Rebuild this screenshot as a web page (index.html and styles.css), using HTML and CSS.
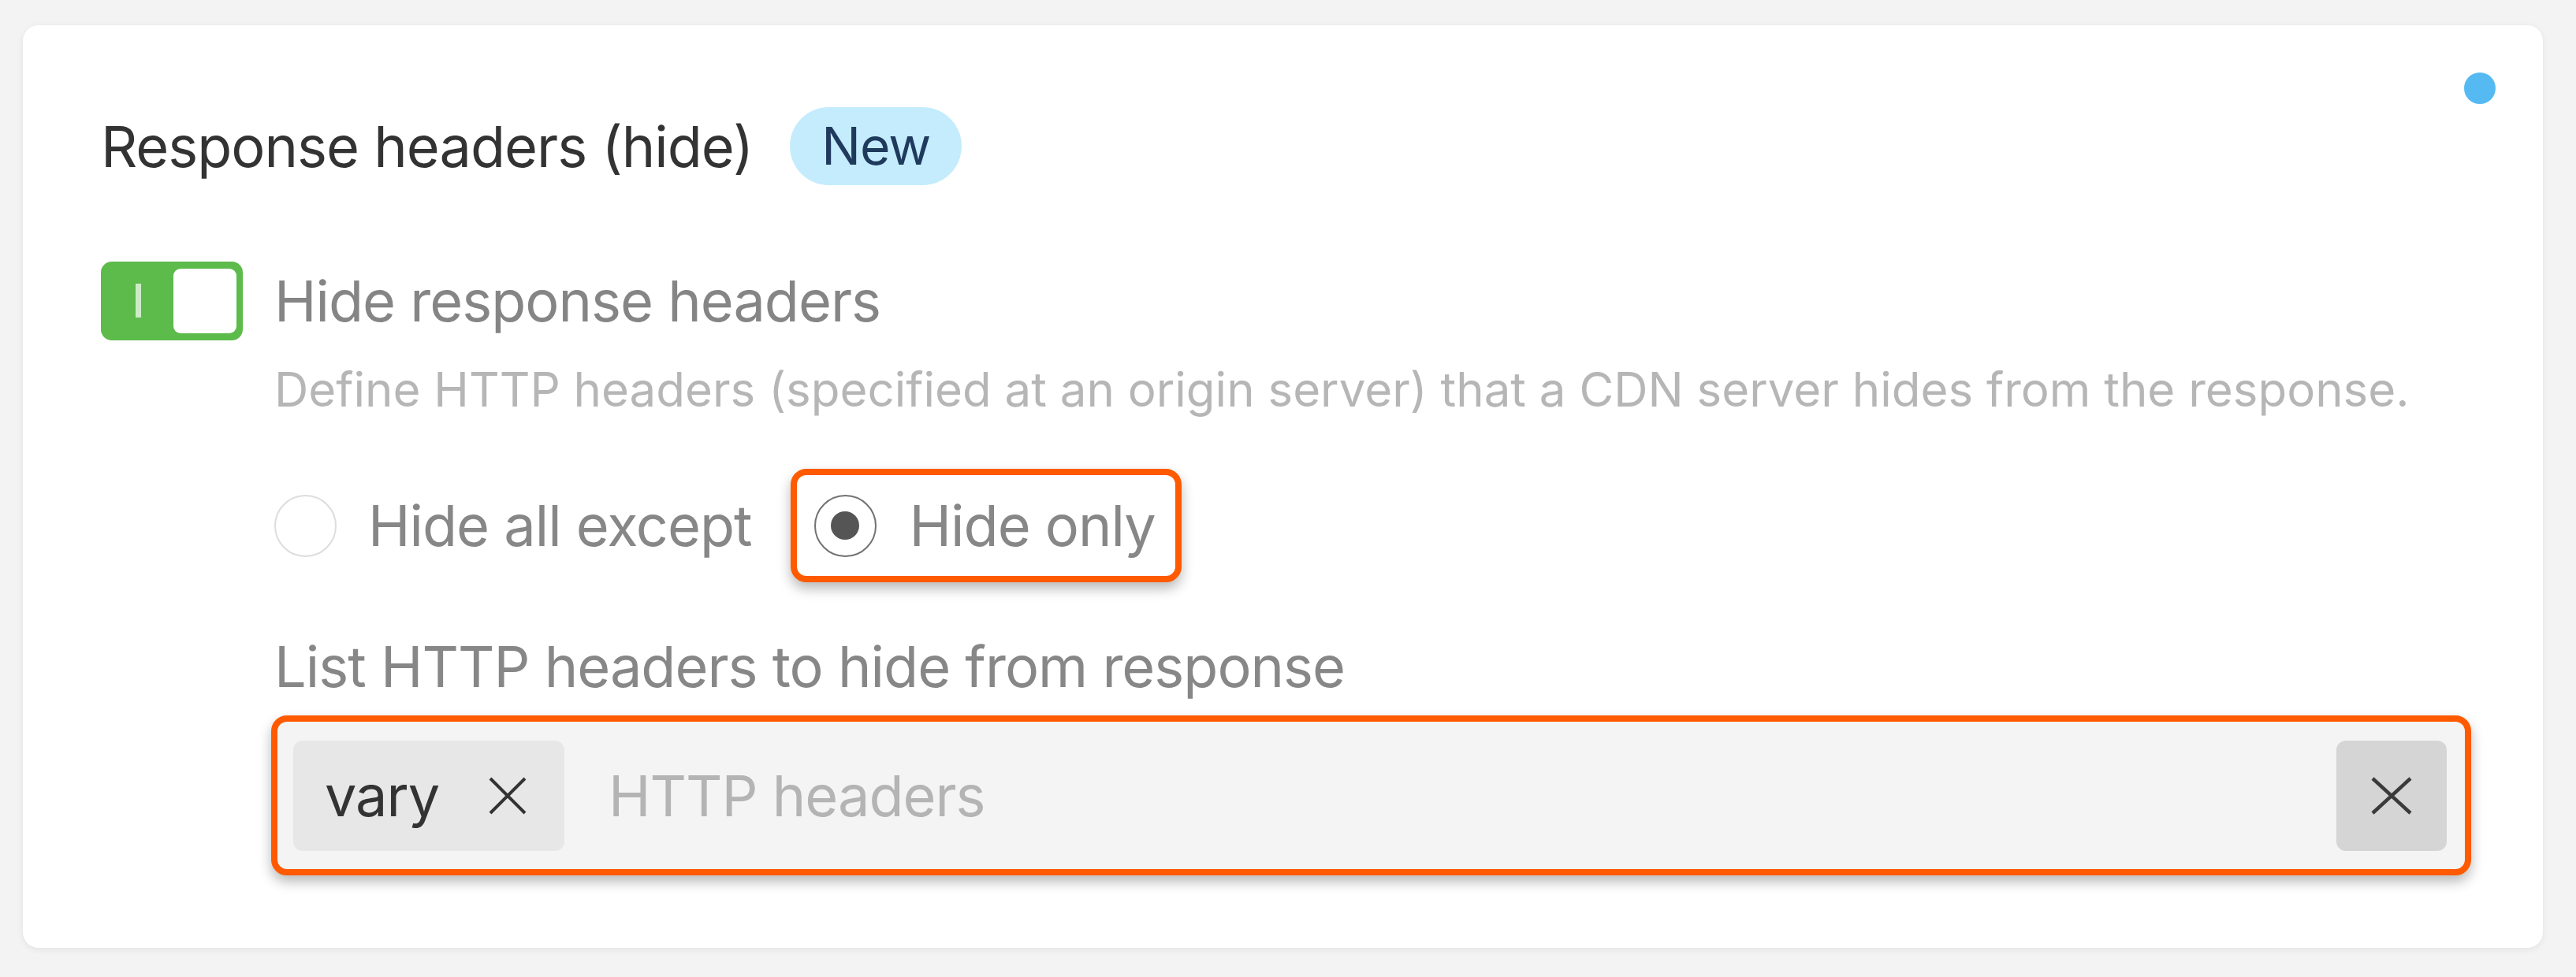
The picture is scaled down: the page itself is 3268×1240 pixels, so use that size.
FILE: index.html
```html
<!DOCTYPE html>
<html lang="en">
<head>
<meta charset="utf-8">
<title>Response headers (hide)</title>
<link rel="stylesheet" href="styles.css">
</head>
<body>
<div class="card">
  <span class="dot"></span>
  <div class="title-row">
    <h2 class="title">Response headers (hide)</h2>
    <span class="badge">New</span>
  </div>
  <div class="toggle-row">
    <div class="toggle"><span class="toggle-bar"></span><span class="toggle-knob"></span></div>
    <span class="toggle-label">Hide response headers</span>
  </div>
  <div class="indent">
    <p class="desc">Define HTTP headers (specified at an origin server) that a CDN server hides from the response.</p>
    <div class="radio-row">
      <label class="radio-option">
        <span class="radio"></span>
        <span class="radio-label">Hide all except</span>
      </label>
      <label class="radio-option highlight">
        <span class="radio checked"><span class="radio-dot"></span></span>
        <span class="radio-label">Hide only</span>
      </label>
    </div>
    <div class="list-label">List HTTP headers to hide from response</div>
    <div class="input">
      <span class="tag">
        <span class="tag-text">vary</span>
        <svg class="x-icon" viewBox="0 0 48 48" width="48" height="48"><path d="M2 2L46 46M46 2L2 46" stroke="#333" stroke-width="4" fill="none"/></svg>
      </span>
      <span class="placeholder">HTTP headers</span>
      <span class="clear-btn">
        <svg class="x-icon" viewBox="0 0 52 48" width="52" height="48"><path d="M2 2L50 46M50 2L2 46" stroke="#3a3a3a" stroke-width="4.5" fill="none"/></svg>
      </span>
    </div>
  </div>
</div>
</body>
</html>
```
FILE: styles.css
```css
html, body {
  margin: 0;
  padding: 0;
}
body {
  background: #f3f3f3;
  width: 3268px;
  height: 1240px;
  overflow: hidden;
  font-family: "Inter", "Noto Sans", sans-serif;
  padding-top: 32px;
  box-sizing: border-box;
}
.card {
  position: relative;
  margin-left: 29px;
  width: 3197px;
  box-sizing: border-box;
  background: #ffffff;
  border-radius: 20px;
  box-shadow: 0 2px 8px rgba(0, 0, 0, 0.07);
  padding: 104px 91px 92px 99px;
}
.dot {
  position: absolute;
  top: 60px;
  right: 60px;
  width: 40px;
  height: 40px;
  border-radius: 50%;
  background: #56baf2;
}
.title-row {
  display: flex;
  align-items: center;
  gap: 47px;
  height: 99px;
}
.title {
  margin: 0;
  font-size: 72px;
  font-weight: 400;
  line-height: 100px;
  letter-spacing: -1px;
  color: #333333;
}
.badge {
  display: inline-flex;
  align-items: center;
  height: 99px;
  padding: 0 40px;
  border-radius: 50px;
  background: #c4ecfd;
  color: #1f3a5c;
  font-size: 66px;
  letter-spacing: -1px;
  line-height: 99px;
}
.toggle-row {
  display: flex;
  align-items: center;
  gap: 40px;
  margin-top: 97px;
  height: 100px;
}
.toggle {
  position: relative;
  width: 180px;
  height: 100px;
  border-radius: 14px;
  background: #5cbb4a;
  display: flex;
  align-items: center;
  justify-content: flex-end;
  padding: 8px;
  box-sizing: border-box;
}
.toggle-bar {
  position: absolute;
  left: 44px;
  top: 28px;
  width: 7px;
  height: 43px;
  background: rgba(255, 255, 255, 0.7);
}
.toggle-knob {
  width: 80px;
  height: 82px;
  border-radius: 9px;
  background: #ffffff;
}
.toggle-label {
  font-size: 72px;
  line-height: 100px;
  letter-spacing: -1px;
  color: #858585;
}
.indent {
  padding-left: 220px;
}
.desc {
  margin: 22px 0 0 0;
  font-size: 60px;
  line-height: 80px;
  color: #b6b6b6;
  white-space: nowrap;
}
.radio-row {
  display: flex;
  align-items: center;
  gap: 49px;
  margin-top: 61px;
  height: 144px;
}
.radio-option {
  display: flex;
  align-items: center;
  gap: 40px;
}
.radio {
  width: 79px;
  height: 79px;
  box-sizing: border-box;
  border-radius: 50%;
  border: 2.5px solid #dddddd;
  background: #fff;
  display: flex;
  align-items: center;
  justify-content: center;
}
.radio.checked {
  border-color: #727272;
}
.radio-dot {
  width: 36px;
  height: 36px;
  border-radius: 50%;
  background: #555555;
}
.radio-label {
  font-size: 72px;
  line-height: 100px;
  letter-spacing: -1px;
  color: #878787;
}
.highlight {
  border: 8px solid #ff5a00;
  border-radius: 20px;
  padding: 24px 25px 24px 22px;
  gap: 42px;
  box-shadow: 0 8px 16px rgba(0, 0, 0, 0.28);
  background: #fff;
  height: 144px;
  box-sizing: border-box;
}
.list-label {
  margin-top: 57px;
  font-size: 72px;
  line-height: 100px;
  letter-spacing: -1px;
  color: #878787;
}
.input {
  margin-top: 12px;
  margin-left: -4px;
  height: 203px;
  box-sizing: border-box;
  border: 8px solid #ff5a00;
  border-radius: 20px;
  background: #f4f4f4;
  box-shadow: 0 8px 16px rgba(0, 0, 0, 0.28);
  display: flex;
  align-items: center;
  padding: 0 23px 0 20px;
}
.tag {
  display: flex;
  align-items: center;
  height: 140px;
  width: 344px;
  box-sizing: border-box;
  padding: 0 48px 0 40px;
  justify-content: space-between;
  border-radius: 12px;
  background: #e7e7e7;
}
.tag-text {
  font-size: 72px;
  line-height: 100px;
  letter-spacing: -1px;
  color: #333333;
}
.x-icon {
  display: block;
}
.placeholder {
  flex: 1;
  margin-left: 56px;
  font-size: 72px;
  line-height: 100px;
  letter-spacing: -1px;
  color: #b4b4b4;
}
.clear-btn {
  width: 140px;
  height: 140px;
  border-radius: 12px;
  background: #d5d5d5;
  display: flex;
  align-items: center;
  justify-content: center;
}
```
